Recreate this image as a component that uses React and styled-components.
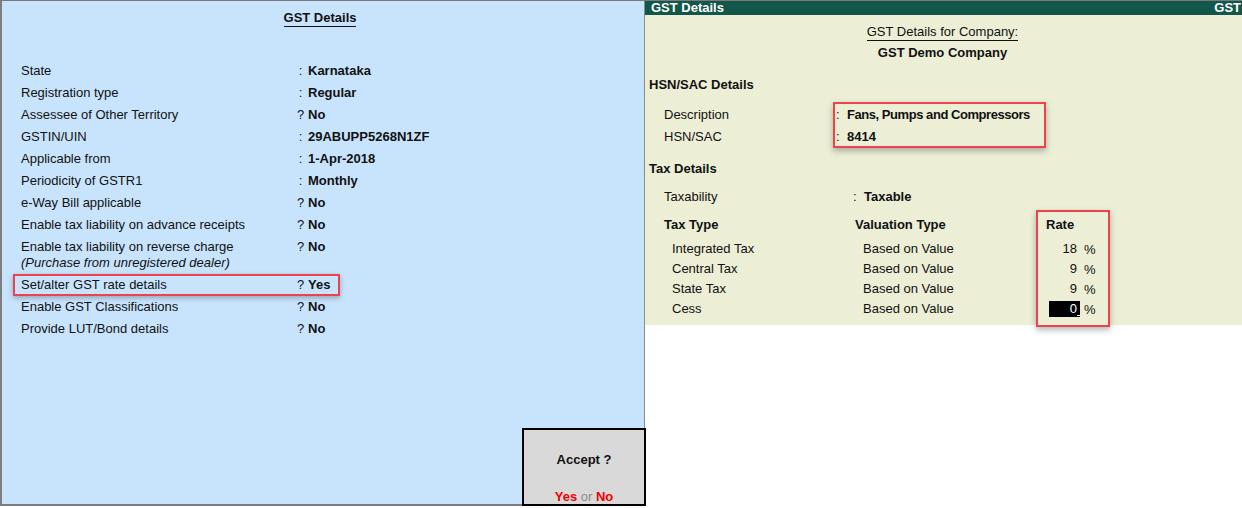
import styled, { createGlobalStyle } from "styled-components";

const GlobalStyle = createGlobalStyle`
  html, body {
    margin: 0;
    padding: 0;
    background: #ffffff;
  }
  body {
    font-family: "Liberation Sans", Arial, sans-serif;
    font-size: 13px;
    color: #111;
  }
`;

const gstRows = [
  { label: "State", mark: ":", value: "Karnataka" },
  { label: "Registration type", mark: ":", value: "Regular" },
  { label: "Assessee of Other Territory", mark: "?", value: "No" },
  { label: "GSTIN/UIN", mark: ":", value: "29ABUPP5268N1ZF" },
  { label: "Applicable from", mark: ":", value: "1-Apr-2018" },
  { label: "Periodicity of GSTR1", mark: ":", value: "Monthly" },
  { label: "e-Way Bill applicable", mark: "?", value: "No" },
  { label: "Enable tax liability on advance receipts", mark: "?", value: "No" },
  {
    label: "Enable tax liability on reverse charge",
    note: "(Purchase from unregistered dealer)",
    mark: "?",
    value: "No",
  },
  { label: "Set/alter GST rate details", mark: "?", value: "Yes", marked: true },
  { label: "Enable GST Classifications", mark: "?", value: "No" },
  { label: "Provide LUT/Bond details", mark: "?", value: "No" },
];

const taxes = [
  { name: "Integrated Tax", rate: "18" },
  { name: "Central Tax", rate: "9" },
  { name: "State Tax", rate: "9" },
  { name: "Cess", rate: "0", editing: true },
];

const App = () => {
  return (
    <Screen>
      <GlobalStyle />
      <LeftPanel>
        <HeadingRow>
          <Heading>GST Details</Heading>
        </HeadingRow>
        <FieldList>
          {gstRows.map((r) => (
            <Field key={r.label} $marked={r.marked}>
              <Label>
                {r.label}
                {r.note && <Note>{r.note}</Note>}
              </Label>
              <Mark>{r.mark}</Mark>
              <Value>{r.value}</Value>
            </Field>
          ))}
        </FieldList>
        <AcceptBox>
          <AcceptText>Accept ?</AcceptText>
          <Choices>
            <Choice>Yes</Choice> <Or>or</Or> <Choice>No</Choice>
          </Choices>
        </AcceptBox>
      </LeftPanel>

      <RightPanel>
        <TitleBar>
          <span>GST Details</span>
          <span>GST</span>
        </TitleBar>
        <RightBody>
          <CompanyTitle>GST Details for Company:</CompanyTitle>
          <CompanyName>GST Demo Company</CompanyName>

          <Section $top="16px">HSN/SAC Details</Section>
          <HsnGrid>
            <LabelCol>
              <Cell>Description</Cell>
              <Cell>HSN/SAC</Cell>
            </LabelCol>
            <Highlight $pad="2px 16px 0 3px" $lift="-2px">
              <Cell>
                <Colon>:</Colon>
                <Narrow>Fans, Pumps and Compressors</Narrow>
              </Cell>
              <Cell>
                <Colon>:</Colon>
                <b>8414</b>
              </Cell>
            </Highlight>
          </HsnGrid>

          <Section $top="13px">Tax Details</Section>
          <TaxabilityRow>
            <TaxLabel>Taxability</TaxLabel>
            <Colon>:</Colon>
            <b>Taxable</b>
          </TaxabilityRow>

          <TaxTable>
            <TaxCol $w="191px">
              <HeadCell>Tax Type</HeadCell>
              {taxes.map((t) => (
                <TaxCell key={t.name}>{t.name}</TaxCell>
              ))}
            </TaxCol>
            <TaxCol $w="181px">
              <HeadCell>Valuation Type</HeadCell>
              {taxes.map((t) => (
                <TaxCell key={t.name}>Based on Value</TaxCell>
              ))}
            </TaxCol>
            <Highlight $pad="5px 14px 8px 10px" $lift="-4px">
              <HeadCell>Rate</HeadCell>
              {taxes.map((t) => (
                <RateCell key={t.name}>
                  <RateNum $editing={t.editing}>{t.rate}</RateNum>
                  <span>%</span>
                </RateCell>
              ))}
            </Highlight>
          </TaxTable>
        </RightBody>
      </RightPanel>
    </Screen>
  );
};

const Screen = styled.div`
  width: 1242px;
  height: 508px;
  display: flex;
  align-items: flex-start;
  border-top: 1px solid #7a7a7a;
  box-sizing: border-box;
  overflow: hidden;
`;

const LeftPanel = styled.div`
  position: relative;
  width: 645px;
  height: 505px;
  flex-shrink: 0;
  box-sizing: border-box;
  background: #c8e4fd;
  border-left: 2px solid #7d7d7d;
  border-right: 1px solid #8a8a8a;
  border-bottom: 2px solid #7d7d7d;
  padding-top: 9px;
`;

const HeadingRow = styled.div`
  display: flex;
  justify-content: center;
  padding-right: 6px;
`;

const Heading = styled.div`
  font-weight: 700;
  line-height: 16px;
  border-bottom: 1px solid #111;
`;

const FieldList = styled.div`
  display: flex;
  flex-direction: column;
  align-items: flex-start;
  margin-top: 33px;
  padding-left: 11px;
`;

const Field = styled.div`
  display: grid;
  grid-template-columns: 275px 9px auto;
  align-items: start;
  padding: 3px 10px 3px 8px;
  line-height: 16px;
  box-shadow: ${(p) =>
    p.$marked
      ? "inset 0 0 0 2px #ee434b, 0 2px 5px rgba(40, 50, 60, 0.35)"
      : "none"};
`;

const Label = styled.div`
  display: flex;
  flex-direction: column;
`;

const Note = styled.i`
  font-style: italic;
`;

const Mark = styled.span`
  text-align: center;
`;

const Value = styled.b`
  padding-left: 3px;
`;

const AcceptBox = styled.div`
  position: absolute;
  right: -2px;
  bottom: -2px;
  width: 124px;
  height: 78px;
  box-sizing: border-box;
  background: #d9d9d9;
  border: 2px solid #000;
  display: flex;
  flex-direction: column;
  align-items: center;
  justify-content: space-between;
  padding: 22px 0 0 0;
`;

const AcceptText = styled.div`
  font-weight: 700;
`;

const Choices = styled.div`
  font-weight: 700;
  line-height: 14px;
  white-space: pre;
`;

const Choice = styled.span`
  color: #f00000;
`;

const Or = styled.span`
  color: #8c8c8c;
  font-weight: 400;
`;

const RightPanel = styled.div`
  flex: 1;
  margin-left: -3px;
  height: 324px;
  box-sizing: border-box;
  background: #eceed5;
  border-left: 1px solid #8c8c8c;
  display: flex;
  flex-direction: column;
  min-width: 0;
`;

const TitleBar = styled.div`
  display: flex;
  justify-content: space-between;
  align-items: center;
  height: 14px;
  background: #13574a;
  color: #fff;
  font-weight: 700;
  line-height: 14px;
  padding: 0 1px 0 8px;
`;

const RightBody = styled.div`
  display: flex;
  flex-direction: column;
  padding: 9px 0 0 6px;
`;

const CompanyTitle = styled.div`
  align-self: center;
  margin-left: -6px;
  line-height: 16px;
  border-bottom: 1px solid #111;
`;

const CompanyName = styled.div`
  align-self: center;
  margin: 4px 0 0 -6px;
  line-height: 16px;
  font-weight: 700;
`;

const Section = styled.div`
  margin-top: ${(p) => p.$top};
  font-weight: 700;
  line-height: 16px;
`;

const HsnGrid = styled.div`
  display: flex;
  align-items: flex-start;
  margin-top: 11px;
  padding-left: 15px;
`;

const LabelCol = styled.div`
  width: 169px;
`;

const Cell = styled.div`
  height: 22px;
  line-height: 22px;
  white-space: nowrap;
`;

const Narrow = styled.b`
  letter-spacing: -0.45px;
`;

const Highlight = styled.div`
  padding: ${(p) => p.$pad};
  margin-top: ${(p) => p.$lift};
  box-shadow: inset 0 0 0 2px #ee434b, 0 3px 6px rgba(40, 50, 60, 0.35);
`;

const Colon = styled.span`
  display: inline-block;
  width: 11px;
`;

const TaxabilityRow = styled.div`
  display: flex;
  align-items: center;
  height: 22px;
  margin-top: 8px;
  padding-left: 15px;
`;

const TaxLabel = styled.span`
  width: 189px;
`;

const TaxTable = styled.div`
  display: flex;
  align-items: flex-start;
  margin-top: 7px;
  padding-left: 15px;
`;

const TaxCol = styled.div`
  width: ${(p) => p.$w};
  padding-top: 1px;
`;

const HeadCell = styled.div`
  height: 20px;
  line-height: 20px;
  font-weight: 700;
  margin-bottom: 4px;
`;

const TaxCell = styled.div`
  height: 20px;
  line-height: 20px;
  padding-left: 8px;
  white-space: nowrap;
`;

const RateCell = styled.div`
  display: flex;
  align-items: center;
  gap: 4px;
  height: 20px;
`;

const RateNum = styled.span`
  position: relative;
  width: 31px;
  margin-left: 3px;
  height: 16px;
  line-height: 16px;
  text-align: right;
  padding-right: 3px;
  box-sizing: border-box;
  background: ${(p) => (p.$editing ? "#000" : "transparent")};
  color: ${(p) => (p.$editing ? "#fff" : "inherit")};

  &::after {
    content: "";
    display: ${(p) => (p.$editing ? "block" : "none")};
    position: absolute;
    right: 0;
    bottom: 1px;
    width: 3px;
    height: 1px;
    background: #fff;
  }
`;

export default App;
